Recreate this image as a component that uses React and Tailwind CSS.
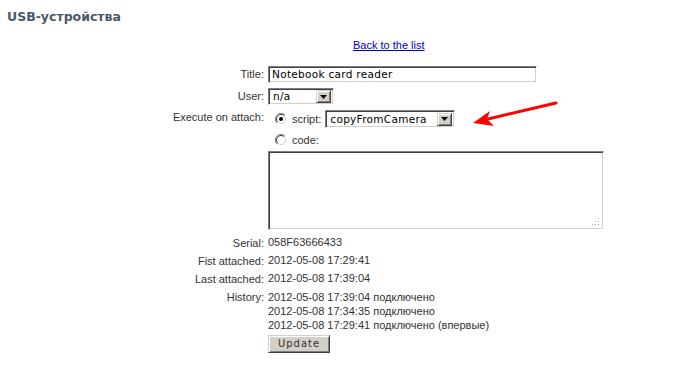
import React from 'react';

const inset = "border border-t-[#808080] border-l-[#808080] border-r-white border-b-white shadow-[inset_1px_1px_0_#404040,inset_-1px_-1px_0_#d4d0c8]";
const outset = "border border-t-[#d4d0c8] border-l-[#d4d0c8] border-r-[#404040] border-b-[#404040] shadow-[inset_1px_1px_0_#ffffff,inset_-1px_-1px_0_#808080] bg-[#d4d0c8]";
const mono = "font-['DejaVu_Sans',sans-serif] font-normal text-[10.5px] tracking-[0.3px] text-black";

function Select({ value, w, h }) {
  return (
    <div className={`${inset} bg-white flex items-center ${w} ${h} pl-[4px] pr-[2px]`}>
      <span className={`${mono} flex-1 leading-none`}>{value}</span>
      <span className={`${outset} w-[15px] h-[13px] flex items-center justify-center`}>
        <svg width="7" height="4" viewBox="0 0 7 4"><path d="M0 0h7L3.5 4z" fill="#000" /></svg>
      </span>
    </div>
  );
}

function Radio({ checked }) {
  return (
    <svg width="12" height="12" viewBox="0 0 12 12" className="shrink-0">
      <circle cx="6" cy="6" r="5.5" fill="#fff" />
      <path d="M10 2 A5.5 5.5 0 0 0 2 10" stroke="#808080" strokeWidth="1" fill="none" />
      <path d="M9.2 2.8 A4.5 4.5 0 0 0 2.8 9.2" stroke="#404040" strokeWidth="1" fill="none" />
      <path d="M10 2 A5.5 5.5 0 0 1 2 10" stroke="#ffffff" strokeWidth="1" fill="none" />
      <path d="M9.2 2.8 A4.5 4.5 0 0 1 2.8 9.2" stroke="#d4d0c8" strokeWidth="1" fill="none" />
      {checked && <circle cx="6" cy="6" r="2" fill="#000" />}
    </svg>
  );
}

function Row({ label, children, className = "", labelCls = "leading-[18px]" }) {
  return (
    <div className={`flex ${className}`}>
      <div className={`w-[264px] shrink-0 text-right ${labelCls}`}>{label}</div>
      <div className="ml-[4px]">{children}</div>
    </div>
  );
}

export default function App() {
  return (
    <div className="relative w-[687px] h-[365px] bg-white overflow-hidden font-['Liberation_Sans',Arial,sans-serif] text-[11px] text-[#333]">
      <h1 className="pt-[9px] pl-[7px] leading-[16px] font-['DejaVu_Sans',sans-serif] font-bold text-[12.5px] text-[#4a5866]">USB-устройства</h1>
      <div className="mt-[13px] pl-[353px] leading-[14px]">
        <a href="#" className="text-[#0000cc] underline">Back to the list</a>
      </div>

      <Row label="Title:" className="mt-[14px]" labelCls="leading-[17px]">
        <div className={`${inset} w-[269px] h-[17px] flex items-center pl-[3px] ${mono}`}>Notebook card reader</div>
      </Row>
      <Row label="User:" className="mt-[5px]" labelCls="leading-[17px]">
        <Select value="n/a" w="w-[66px]" h="h-[17px]" />
      </Row>
      <Row label="Execute on attach:" className="mt-[5px]" labelCls="leading-[14px]">
        <div className="flex items-center h-[18px]">
          <span className="ml-[7px]"><Radio checked /></span>
          <span className="ml-[5px]">script:</span>
          <span className="ml-[4px]"><Select value="copyFromCamera" w="w-[130px]" h="h-[18px]" /></span>
        </div>
        <div className="flex items-center h-[16px] mt-[4px]">
          <span className="ml-[7px]"><Radio /></span>
          <span className="ml-[5px]">code:</span>
        </div>
        <div className={`${inset} relative mt-[3px] w-[336px] h-[79px] bg-white`}>
          <svg width="8" height="8" viewBox="0 0 8 8" className="absolute right-[3px] bottom-[3px]">
            <g fill="#b0b0b0">
              <rect x="6" y="0" width="1" height="1" />
              <rect x="3" y="3" width="1" height="1" /><rect x="6" y="3" width="1" height="1" />
              <rect x="0" y="6" width="1" height="1" /><rect x="3" y="6" width="1" height="1" /><rect x="6" y="6" width="1" height="1" />
            </g>
          </svg>
        </div>
      </Row>
      <Row label="Serial:" className="mt-[4px]">058F63666433</Row>
      <Row label="Fist attached:">2012-05-08 17:29:41</Row>
      <Row label="Last attached:">2012-05-08 17:39:04</Row>
      <Row label="History:" className="pt-[2px]" labelCls="leading-[14px]">
        <div className="leading-[14px]">
          <div>2012-05-08 17:39:04 подключено</div>
          <div>2012-05-08 17:34:35 подключено</div>
          <div>2012-05-08 17:29:41 подключено (впервые)</div>
        </div>
      </Row>
      <Row label="" className="mt-[3px]">
        <button className={`${outset} w-[62px] h-[18px] font-['DejaVu_Sans',sans-serif] font-normal text-[10px] tracking-[1px] leading-none text-[#333]`}>Update</button>
      </Row>

      <svg className="absolute left-[465px] top-[95px]" width="100" height="35" viewBox="465 95 100 35">
        <path d="M556 103 L488 119" stroke="#ff0000" strokeWidth="3" strokeLinecap="round" />
        <path d="M473 123 L490 111 L487 119 L494 126 Z" fill="#ff0000" />
      </svg>
    </div>
  );
}
